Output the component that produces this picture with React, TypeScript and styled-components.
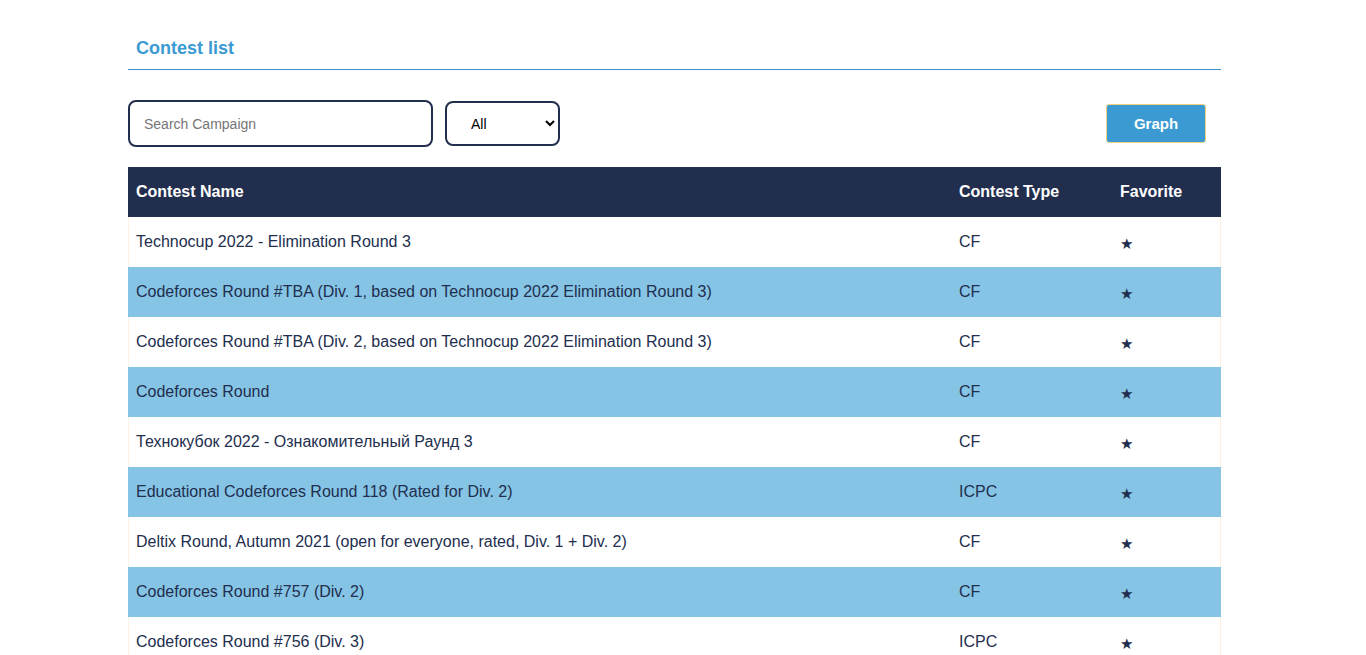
import React from "react";
import styled, { createGlobalStyle } from "styled-components";

const GlobalStyle = createGlobalStyle`
  body {
    margin: 8px;
    background: #ffffff;
    font-family: "Liberation Sans", Arial, sans-serif;
  }
`;

const Page = styled.div`
  width: 1093px;
  margin: 0 0 0 120px;
  padding-bottom: 29px;
`;

const Title = styled.h2`
  margin: 0;
  padding: 30px 8px 10px;
  font-size: 18px;
  line-height: 21px;
  font-weight: 700;
  color: #3a9ad1;
  border-bottom: 1px solid #3d8fc4;
`;

const Controls = styled.div`
  display: flex;
  align-items: center;
  gap: 12px;
  margin-top: 30px;
  margin-bottom: 20px;
`;

const SearchInput = styled.input`
  box-sizing: border-box;
  width: 305px;
  height: 47px;
  border: 2px solid #222e4e;
  border-radius: 8px;
  padding: 0 14px;
  font-family: "Liberation Sans", Arial, sans-serif;
  font-size: 14px;
  color: #222;
  outline: none;
  &::placeholder {
    color: #757575;
  }
`;

const Select = styled.select`
  box-sizing: border-box;
  width: 115px;
  height: 45px;
  border: 2px solid #222e4e;
  border-radius: 8px;
  padding: 0 6px 0 20px;
  font-family: "Liberation Sans", Arial, sans-serif;
  font-size: 14px;
  color: #000;
  background: #fff;
`;

const GraphButton = styled.button`
  margin-left: auto;
  margin-right: 15px;
  box-sizing: border-box;
  width: 100px;
  height: 39px;
  background: #3a9ad1;
  border: 1px solid #f0d27a;
  border-radius: 3px;
  color: #fff;
  font-family: "Liberation Sans", Arial, sans-serif;
  font-size: 15px;
  font-weight: 700;
`;

const Table = styled.table`
  width: 100%;
  border-collapse: collapse;
  table-layout: fixed;
`;

const HeadCell = styled.th<{ $w: number }>`
  box-sizing: border-box;
  width: ${(p) => p.$w}px;
  height: 50px;
  padding: 0 8px;
  background: #222e4e;
  color: #fff;
  text-align: left;
  font-size: 16px;
  font-weight: 700;
`;

const Row = styled.tr<{ $alt: boolean }>`
  height: 50px;
  background: ${(p) => (p.$alt ? "#85c4e4" : "#ffffff")};
  td:first-child {
    box-shadow: inset 1px 0 0 ${(p) => (p.$alt ? "#85c4e4" : "#fbf3df")};
  }
  td:last-child {
    box-shadow: inset -1px 0 0 ${(p) => (p.$alt ? "#85c4e4" : "#fbf3df")};
  }
`;

const Cell = styled.td`
  padding: 0 8px;
  font-size: 16px;
  color: #222e4e;
  vertical-align: middle;
`;

const StarCell = styled.td`
  padding: 3px 8px 0;
  font-size: 15px;
  color: #222e4e;
  vertical-align: middle;
`;

const contests: [string, string][] = [
  ["Technocup 2022 - Elimination Round 3", "CF"],
  ["Codeforces Round #TBA (Div. 1, based on Technocup 2022 Elimination Round 3)", "CF"],
  ["Codeforces Round #TBA (Div. 2, based on Technocup 2022 Elimination Round 3)", "CF"],
  ["Codeforces Round", "CF"],
  ["Технокубок 2022 - Ознакомительный Раунд 3", "CF"],
  ["Educational Codeforces Round 118 (Rated for Div. 2)", "ICPC"],
  ["Deltix Round, Autumn 2021 (open for everyone, rated, Div. 1 + Div. 2)", "CF"],
  ["Codeforces Round #757 (Div. 2)", "CF"],
  ["Codeforces Round #756 (Div. 3)", "ICPC"],
  ["Codeforces Round #755 (Div. 1, based on Technocup 2022 Elimination Round 2)", "CF"],
  ["Codeforces Round #755 (Div. 2, based on Technocup 2022 Elimination Round 2)", "CF"],
  ["Technocup 2022 - Elimination Round 2", "CF"],
  ["Educational Codeforces Round 117 (Rated for Div. 2)", "ICPC"],
  ["Codeforces Round #754 (Div. 2)", "CF"],
  ["Codeforces Round #753 (Div. 3)", "ICPC"],
];

export default function App() {
  return (
    <>
      <GlobalStyle />
      <Page>
        <Title>Contest list</Title>
        <Controls>
          <SearchInput placeholder="Search Campaign" />
          <Select defaultValue="All">
            <option>All</option>
            <option>CF</option>
            <option>ICPC</option>
          </Select>
          <GraphButton>Graph</GraphButton>
        </Controls>
        <Table>
          <thead>
            <tr>
              <HeadCell $w={823}>Contest Name</HeadCell>
              <HeadCell $w={161}>Contest Type</HeadCell>
              <HeadCell $w={109}>Favorite</HeadCell>
            </tr>
          </thead>
          <tbody>
            {contests.map(([name, type], i) => (
              <Row key={i} $alt={i % 2 === 1}>
                <Cell>{name}</Cell>
                <Cell>{type}</Cell>
                <StarCell>★</StarCell>
              </Row>
            ))}
          </tbody>
        </Table>
      </Page>
    </>
  );
}
